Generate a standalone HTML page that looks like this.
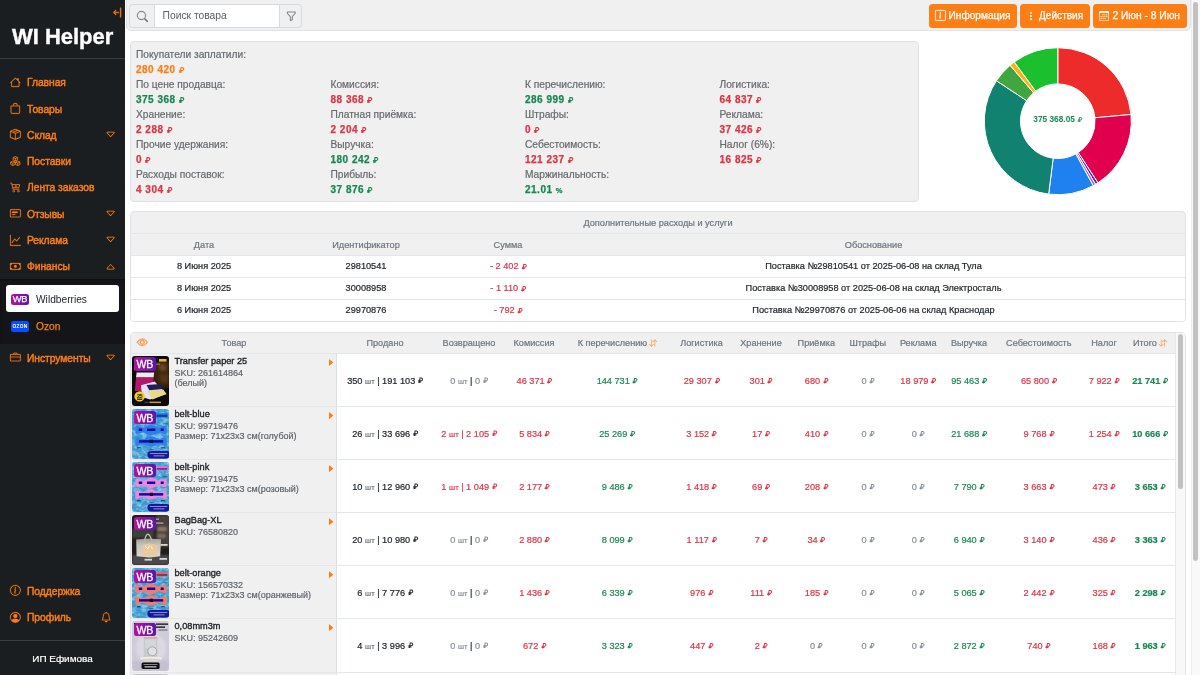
<!DOCTYPE html><html lang="ru"><head><meta charset="utf-8"><title>WI Helper</title><style>
*{box-sizing:border-box}
html,body{margin:0;padding:0}
html{width:1200px;height:675px;overflow:hidden}
body{width:1200px;height:675px;overflow:hidden;background:#fff;will-change:transform;font-family:"Liberation Sans",sans-serif;position:relative;color:#212529}
#root{position:absolute;left:0;top:0;width:1200px;height:675px;overflow:hidden}
svg.ic{fill:currentColor;display:block;stroke:currentColor;stroke-width:.35;overflow:visible}
svg.rub{width:.5em;height:.6em;fill:none;stroke:currentColor;stroke-width:2.2;display:inline-block;vertical-align:baseline;margin-left:.32em;overflow:visible;transform:skewX(-8deg)}
.abs{position:absolute}
#sb{position:absolute;left:0;top:0;width:125px;height:675px;background:#1b1e21}
#logo{position:absolute;left:11.9px;top:21.8px;font-size:22px;font-weight:700;color:#fff;line-height:30px;letter-spacing:0;-webkit-text-stroke:.35px #fff;white-space:nowrap}
.hr{position:absolute;left:0;width:125px;height:1px;background:#3a3f44}
.mi{position:absolute;left:0;width:125px;height:20px;color:#fd7e14;font-size:10.3px;font-weight:400;-webkit-text-stroke:.45px #fd7e14;line-height:20px;letter-spacing:-.05px;white-space:nowrap}
.mi .ic{position:absolute;left:10.2px;top:4.7px}
.mi span{position:absolute;left:27px;top:1.2px}
.mi .car{left:105.3px;top:4.4px;stroke-width:.1}
#sub{position:absolute;left:0;top:279px;width:125px;height:65px;background:#131518;box-shadow:inset 0 1px 2px rgba(0,0,0,.35)}
#wbitem{position:absolute;left:6px;top:285px;width:113px;height:27px;background:#fff;border-radius:3px}
.badge{position:absolute;border-radius:2.5px;color:#fff;font-weight:700;text-align:center}
#main{position:absolute;left:125px;top:0;width:1075px;height:675px}
#topbar{position:absolute;left:126px;top:-1px;width:1065px;height:32px;background:#f0f0f0;border:1px solid #dfe3e7;border-radius:0 0 5px 5px}
.btn{position:absolute;top:4px;height:23.5px;background:#fd7e14;border-radius:3.5px;color:#fff;font-size:10.1px;line-height:23.5px;white-space:nowrap;-webkit-text-stroke:.25px #fff}
.btn .ic{position:absolute;top:6.5px}
.btn span{position:absolute;top:0}
.panel{position:absolute;background:#f0f0f0;border:1px solid #dfe3e7;border-radius:4px}
.sl{position:absolute;-webkit-text-stroke:.2px;font-size:10.2px;line-height:15px;color:#666a6e;white-space:nowrap}
.sv{position:absolute;-webkit-text-stroke:.25px;font-size:10px;line-height:15px;font-weight:700;letter-spacing:.5px;white-space:nowrap}
.g{color:#198754}.r{color:#dc3545}.o{color:#fd7e14}.m{color:#868e96}
.t1{position:absolute;-webkit-text-stroke:.2px;font-size:9.2px;line-height:22px;white-space:nowrap;text-align:center;transform:translateX(-50%)}
.th{color:#6c757d}
.hl{position:absolute;height:1px;background:#e3e7eb}
.vl{position:absolute;width:1px;background:#e3e7eb}
.c{position:absolute;-webkit-text-stroke:.2px;font-size:9.2px;letter-spacing:0;white-space:nowrap;transform:translate(-50%,-50%);line-height:12px}
.c small{font-size:7.6px;color:#6c757d}
.c.r small,.c .r small{color:#dc3545}
.c.m small{color:#868e96}
.c b{font-weight:700}
.pn{position:absolute;left:174.5px;font-size:9.2px;font-weight:400;-webkit-text-stroke:.35px #212529;color:#212529;white-space:nowrap;line-height:11px}
.ps{position:absolute;left:174.5px;-webkit-text-stroke:.18px;font-size:9px;color:#5c6166;white-space:nowrap;line-height:10.5px}
.tri{position:absolute;left:328.9px;width:4.5px;height:7.2px;background:#fd7e14;clip-path:polygon(0 0,100% 50%,0 100%)}
.img{position:absolute;left:132px;width:37.1px;height:49.7px;border-radius:3px;overflow:hidden}
.img svg{display:block}
.wb{position:absolute;left:1.8px;top:1.4px;width:22px;height:13.8px;border-radius:2.5px;background:linear-gradient(90deg,#b3129e,#5a17a8);color:#fff;font-size:10.6px;font-weight:400;-webkit-text-stroke:.3px #fff;line-height:14.4px;text-align:center;letter-spacing:-.3px}
</style></head><body><div id="root">
<div id="sb">
<svg class="ic" viewBox="0 0 16 16" width="11" height="11" style="position:absolute;left:111.5px;top:7.2px;color:#fd7e14;stroke-width:.9"><path fill-rule="evenodd" d="M12.500 15a.5.5 0 0 1-.5-.5v-13a.5.5 0 0 1 1 0v13a.5.5 0 0 1-.5.5M10 8a.5.5 0 0 1-.5.5H3.707l2.147 2.146a.5.5 0 0 1-.708.708l-3-3a.5.5 0 0 1 0-.708l3-3a.5.5 0 1 1 .708.708L3.707 7.500H9.500a.5.5 0 0 1 .5.5"/></svg>
<div id="logo">WI Helper</div>
<div class="hr" style="top:58.4px"></div>
<div class="mi" style="top:72.2px"><svg class="ic" viewBox="0 0 16 16" width="10.7" height="10.7" style=""><path d="M8.707 1.5a1 1 0 0 0-1.414 0L.646 8.146a.5.5 0 0 0 .708.708L2 8.207V13.5A1.5 1.5 0 0 0 3.5 15h9a1.5 1.5 0 0 0 1.5-1.5V8.207l.646.647a.5.5 0 0 0 .708-.708L13 5.793V2.5a.5.5 0 0 0-.5-.5h-1a.5.5 0 0 0-.5.5v1.293zM13 7.207V13.5a.5.5 0 0 1-.5.5h-9a.5.5 0 0 1-.5-.5V7.207l5-5z"/></svg><span>Главная</span>
</div>
<div class="mi" style="top:98.4px"><svg class="ic" viewBox="0 0 16 16" width="10.7" height="10.7" style=""><path d="M8 1a2.5 2.5 0 0 1 2.5 2.5V4h-5v-.5A2.5 2.5 0 0 1 8 1m3.5 3v-.5a3.5 3.5 0 1 0-7 0V4H1v10a2 2 0 0 0 2 2h10a2 2 0 0 0 2-2V4zM2 5h12v9a1 1 0 0 1-1 1H3a1 1 0 0 1-1-1z"/></svg><span>Товары</span>
</div>
<div class="mi" style="top:124.5px"><svg class="ic" viewBox="0 0 16 16" width="10.7" height="10.7" style=""><path d="M8.186 1.113a.5.5 0 0 0-.372 0L1.846 3.5l2.404.961L10.404 2zm3.564 1.426L5.596 5 8 5.961 14.154 3.5zm3.25 1.7-6.5 2.6v7.922l6.5-2.6V4.24zM7.5 14.762V6.838L1 4.239v7.923zM7.443.184a1.5 1.5 0 0 1 1.114 0l7.129 2.852A.5.5 0 0 1 16 3.5v8.662a1 1 0 0 1-.629.928l-7.185 2.874a.5.5 0 0 1-.372 0L.63 13.09a1 1 0 0 1-.63-.928V3.5a.5.5 0 0 1 .314-.464z"/></svg><span>Склад</span>
<svg class="ic car" viewBox="0 0 16 16" width="11.2" height="11.2" style=""><path d="M3.204 5h9.592L8 10.481zm-.753.659 4.796 5.480a1 1 0 0 0 1.506 0l4.796-5.480c.566-.647.106-1.659-.753-1.659H3.204a1 1 0 0 0-.753 1.659"/></svg>
</div>
<div class="mi" style="top:151.1px"><svg class="ic" viewBox="0 0 16 16" width="10.7" height="10.7" style=""><g fill="none" stroke="currentColor" stroke-width="1.25" stroke-linejoin="round"><path d="M8 .8l3.3 1.5v3.6L8 7.4 4.7 5.9V2.3z M4.7 2.3L8 3.8l3.3-1.5M8 3.8v3.6"/><path d="M4.3 7.6l3.3 1.5v3.6l-3.3 1.5L1 12.7V9.1z M1 9.1l3.3 1.5 3.3-1.5M4.3 10.6v3.6"/><path d="M11.7 7.6L15 9.1v3.6l-3.3 1.5-3.3-1.5V9.1z M8.4 9.1l3.3 1.5L15 9.1M11.7 10.6v3.6"/></g></svg><span>Поставки</span>
</div>
<div class="mi" style="top:177.3px"><svg class="ic" viewBox="0 0 16 16" width="10.7" height="10.7" style=""><g fill="none" stroke="currentColor" stroke-width="1.25" stroke-linecap="round" stroke-linejoin="round"><path d="M.8 1.700h1.800l1.800 9h9.200"/><path d="M3.300 3.900h11.200l-1.100 4.600H4.300"/><path d="M8.800 4.900v2.600M7.500 6.200h2.600" stroke-width="1"/><circle cx="5.400" cy="13.600" r="1.400" stroke-width="1"/><circle cx="12.400" cy="13.600" r="1.400" stroke-width="1"/></g></svg><span>Лента заказов</span>
</div>
<div class="mi" style="top:203.4px"><svg class="ic" viewBox="0 0 16 16" width="10.7" height="10.7" style=""><path d="M14.500 3a.5.5 0 0 1 .5.5v9a.5.5 0 0 1-.5.5h-13a.5.5 0 0 1-.5-.5v-9a.5.5 0 0 1 .5-.5zm-13-1A1.500 1.500 0 0 0 0 3.500v9A1.500 1.500 0 0 0 1.500 14h13a1.500 1.500 0 0 0 1.500-1.500v-9A1.500 1.500 0 0 0 14.500 2z"/><rect x="3" y="5.200" width="8.500" height="2.200" rx=".5"/><rect x="3" y="9.200" width="5" height="1.100" rx=".5"/></svg><span>Отзывы</span>
<svg class="ic car" viewBox="0 0 16 16" width="11.2" height="11.2" style=""><path d="M3.204 5h9.592L8 10.481zm-.753.659 4.796 5.480a1 1 0 0 0 1.506 0l4.796-5.480c.566-.647.106-1.659-.753-1.659H3.204a1 1 0 0 0-.753 1.659"/></svg>
</div>
<div class="mi" style="top:230.0px"><svg class="ic" viewBox="0 0 16 16" width="10.7" height="10.7" style=""><path fill-rule="evenodd" d="M0 0h1v15h15v1H0zm14.817 3.113a.5.5 0 0 1 .07.704l-4.5 5.5a.5.5 0 0 1-.74.037L7.06 6.767l-3.656 5.027a.5.5 0 0 1-.808-.588l4-5.5a.5.5 0 0 1 .758-.06l2.609 2.61 4.15-5.073a.5.5 0 0 1 .704-.07"/></svg><span>Реклама</span>
<svg class="ic car" viewBox="0 0 16 16" width="11.2" height="11.2" style=""><path d="M3.204 5h9.592L8 10.481zm-.753.659 4.796 5.480a1 1 0 0 0 1.506 0l4.796-5.480c.566-.647.106-1.659-.753-1.659H3.204a1 1 0 0 0-.753 1.659"/></svg>
</div>
<div class="mi" style="top:256.3px"><svg class="ic" viewBox="0 0 16 16" width="10.7" height="10.7" style=""><path d="M8 10a2 2 0 1 0 0-4 2 2 0 0 0 0 4"/><path d="M0 4a1 1 0 0 1 1-1h14a1 1 0 0 1 1 1v8a1 1 0 0 1-1 1H1a1 1 0 0 1-1-1zm3 0a2 2 0 0 1-2 2v4a2 2 0 0 1 2 2h10a2 2 0 0 1 2-2V6a2 2 0 0 1-2-2z"/></svg><span>Финансы</span>
<svg class="ic car" viewBox="0 0 16 16" width="11.2" height="11.2" style=""><path d="M3.204 11h9.592L8 5.519zm-.753-.659 4.796-5.480a1 1 0 0 1 1.506 0l4.796 5.480c.566.647.106 1.659-.753 1.659H3.204a1 1 0 0 1-.753-1.659"/></svg>
</div>
<div class="mi" style="top:347.7px"><svg class="ic" viewBox="0 0 16 16" width="10.7" height="10.7" style=""><path d="M6.5 1A1.5 1.5 0 0 0 5 2.5V3H1.5A1.5 1.5 0 0 0 0 4.500v8A1.500 1.500 0 0 0 1.500 14h13a1.500 1.500 0 0 0 1.500-1.500v-8A1.500 1.500 0 0 0 14.500 3H11v-.5A1.500 1.500 0 0 0 9.500 1zm0 1h3a.5.5 0 0 1 .5.5V3H6v-.5a.5.5 0 0 1 .5-.5m-5 2h13a.5.5 0 0 1 .5.5V7H1V4.500a.5.5 0 0 1 .5-.5M1 8h14v4.500a.5.5 0 0 1-.5.5h-13a.5.5 0 0 1-.5-.5z"/></svg><span>Инструменты</span>
<svg class="ic car" viewBox="0 0 16 16" width="11.2" height="11.2" style=""><path d="M3.204 5h9.592L8 10.481zm-.753.659 4.796 5.480a1 1 0 0 0 1.506 0l4.796-5.480c.566-.647.106-1.659-.753-1.659H3.204a1 1 0 0 0-.753 1.659"/></svg>
</div>
<div class="mi" style="top:580.6px"><svg class="ic" viewBox="0 0 16 16" width="10.7" height="10.7" style=""><path d="M8 15A7 7 0 1 1 8 1a7 7 0 0 1 0 14m0 1A8 8 0 1 0 8 0a8 8 0 0 0 0 16"/><path d="m8.930 6.588-2.290.287-.082.380.450.083c.294.070.352.176.288.469l-.738 3.468c-.194.897.105 1.319.808 1.319.545 0 1.178-.252 1.465-.598l.088-.416c-.200.176-.492.246-.686.246-.275 0-.375-.193-.304-.533zM9 4.500a1 1 0 1 1-2 0 1 1 0 0 1 2 0"/></svg><span>Поддержка</span>
</div>
<div class="mi" style="top:607.0px"><svg class="ic" viewBox="0 0 16 16" width="10.7" height="10.7" style=""><path d="M11 6a3 3 0 1 1-6 0 3 3 0 0 1 6 0"/><path fill-rule="evenodd" d="M0 8a8 8 0 1 1 16 0A8 8 0 0 1 0 8m8-7a7 7 0 0 0-5.468 11.370C3.242 11.226 4.805 10 8 10s4.757 1.225 5.468 2.370A7 7 0 0 0 8 1"/></svg><span>Профиль</span>
</div>
<svg class="ic" viewBox="0 0 16 16" width="10.3" height="10.3" style="position:absolute;left:100.8px;top:611.8px;color:#fd7e14"><path d="M8 16a2 2 0 0 0 2-2H6a2 2 0 0 0 2 2M8 1.918l-.797.161A4 4 0 0 0 4 6c0 .628-.134 2.197-.459 3.742-.16.767-.376 1.566-.663 2.258h10.244c-.287-.692-.502-1.490-.663-2.258C12.134 8.197 12 6.628 12 6a4 4 0 0 0-3.203-3.920zM14.220 12c.223.447.481.801.780 1H1c.299-.199.557-.553.780-1C2.680 10.200 3 6.880 3 6c0-2.420 1.720-4.440 4.005-4.901a1 1 0 1 1 1.990 0A5 5 0 0 1 13 6c0 .880.320 4.200 1.220 6"/></svg>
<div id="sub"></div>
<div id="wbitem"></div>
<div class="badge" style="left:10.7px;top:294px;width:18.7px;height:11.2px;background:linear-gradient(90deg,#b3129e,#5a17a8);font-size:9.3px;font-weight:400;-webkit-text-stroke:.25px #fff;line-height:11.6px;letter-spacing:-.3px">WB</div>
<div class="abs" style="left:36px;top:292px;font-size:10.2px;line-height:15px;color:#212529">Wildberries</div>
<div class="badge" style="left:10.7px;top:321px;width:18.7px;height:11px;background:#0a4dff;font-size:4.8px;line-height:11.2px;letter-spacing:.25px">OZON</div>
<div class="abs" style="left:36px;top:319px;font-size:10.2px;line-height:15px;color:#fd7e14;-webkit-text-stroke:.25px #fd7e14">Ozon</div>
<div class="hr" style="top:640px"></div>
<div class="abs" style="left:0;width:125px;top:650.8px;text-align:center;font-size:9.95px;line-height:16px;color:#fff;-webkit-text-stroke:.2px #fff">ИП Ефимова</div>
</div>
<div id="topbar"></div>
<div class="abs" style="left:129px;top:4px;width:172.5px;height:23.5px;border:1px solid #d5dade;border-radius:3.5px;background:#f0f0f0;overflow:hidden"><div class="abs" style="left:24px;top:0;width:126px;height:22px;background:#fff;border-left:1px solid #d5dade;border-right:1px solid #d5dade"></div><svg class="ic" viewBox="0 0 16 16" width="11" height="11" style="position:absolute;left:7px;top:5.5px;color:#6c757d"><path d="M11.742 10.344a6.500 6.500 0 1 0-1.397 1.398h-.001q.044.060.098.115l3.850 3.850a1 1 0 0 0 1.415-1.414l-3.850-3.850a1 1 0 0 0-.115-.100zM12 6.500a5.500 5.500 0 1 1-11 0 5.500 5.500 0 0 1 11 0"/></svg><svg class="ic" viewBox="0 0 16 16" width="10.5" height="10.5" style="position:absolute;left:155.5px;top:6px;color:#6c757d"><path d="M1.500 1.500A.5.5 0 0 1 2 1h12a.5.5 0 0 1 .5.5v2a.5.5 0 0 1-.128.334L10 8.692V13.500a.5.5 0 0 1-.342.474l-3 1A.5.5 0 0 1 6 14.500V8.692L1.628 3.834A.5.5 0 0 1 1.500 3.500zm1 .5v1.308l4.372 4.858A.5.5 0 0 1 7 8.500v5.306l2-.666V8.500a.5.5 0 0 1 .128-.334L13.500 3.308V2z"/></svg><div class="abs" style="left:32.5px;top:0;font-size:10.3px;line-height:22px;color:#5c6166">Поиск товара</div></div>
<div class="btn" style="left:929.3px;width:87.5px"><svg class="ic" viewBox="0 0 16 16" width="10.8" height="10.8" style="left:6.2px;top:6.1px"><path d="M14 1a1 1 0 0 1 1 1v12a1 1 0 0 1-1 1H2a1 1 0 0 1-1-1V2a1 1 0 0 1 1-1zM2 0a2 2 0 0 0-2 2v12a2 2 0 0 0 2 2h12a2 2 0 0 0 2-2V2a2 2 0 0 0-2-2z"/><path d="m8.930 6.588-2.290.287-.082.380.450.083c.294.070.352.176.288.469l-.738 3.468c-.194.897.105 1.319.808 1.319.545 0 1.178-.252 1.465-.598l.088-.416c-.200.176-.492.246-.686.246-.275 0-.375-.193-.304-.533zM9 4.500a1 1 0 1 1-2 0 1 1 0 0 1 2 0"/></svg><span style="left:19.3px">Информация</span></div>
<div class="btn" style="left:1020px;width:70px"><svg class="ic" viewBox="0 0 16 16" width="10" height="10" style="left:6px"><path d="M9.500 13a1.500 1.500 0 1 1-3 0 1.500 1.500 0 0 1 3 0m0-5a1.500 1.500 0 1 1-3 0 1.500 1.500 0 0 1 3 0m0-5a1.500 1.500 0 1 1-3 0 1.500 1.500 0 0 1 3 0"/></svg><span style="left:19px">Действия</span></div>
<div class="btn" style="left:1093.2px;width:93.6px"><svg class="ic" viewBox="0 0 16 16" width="10" height="10" style="left:5.8px;stroke-width:0"><path d="M14 0H2a2 2 0 0 0-2 2v12a2 2 0 0 0 2 2h12a2 2 0 0 0 2-2V2a2 2 0 0 0-2-2M1 3.857C1 3.384 1.448 3 2 3h12c.552 0 1 .384 1 .857v10.286c0 .473-.448.857-1 .857H2c-.552 0-1-.384-1-.857z"/><path d="M6.500 7a1 1 0 1 0 0-2 1 1 0 0 0 0 2m3 0a1 1 0 1 0 0-2 1 1 0 0 0 0 2m3 0a1 1 0 1 0 0-2 1 1 0 0 0 0 2m-9 3a1 1 0 1 0 0-2 1 1 0 0 0 0 2m3 0a1 1 0 1 0 0-2 1 1 0 0 0 0 2m3 0a1 1 0 1 0 0-2 1 1 0 0 0 0 2m3 0a1 1 0 1 0 0-2 1 1 0 0 0 0 2m-9 3a1 1 0 1 0 0-2 1 1 0 0 0 0 2m3 0a1 1 0 1 0 0-2 1 1 0 0 0 0 2m3 0a1 1 0 1 0 0-2 1 1 0 0 0 0 2"/></svg><span style="left:19.2px;font-size:10.25px">2 Июн - 8 Июн</span></div>
<div class="panel" style="left:130px;top:41px;width:789px;height:160.5px"></div>
<div class="sl" style="left:136px;top:46.7px">Покупатели заплатили:</div>
<div class="sv o" style="left:136px;top:61.7px">280 420<svg class="rub" viewBox="0 0 10 12"><path d="M3.3 12V1.3h2.9a3 3 0 0 1 0 6H0.4M0.4 10h6.600" /></svg></div>
<div class="sl" style="left:136px;top:76.7px">По цене продавца:</div>
<div class="sv g" style="left:136px;top:91.7px">375 368<svg class="rub" viewBox="0 0 10 12"><path d="M3.3 12V1.3h2.9a3 3 0 0 1 0 6H0.4M0.4 10h6.600" /></svg></div>
<div class="sl" style="left:136px;top:106.7px">Хранение:</div>
<div class="sv r" style="left:136px;top:121.7px">2 288<svg class="rub" viewBox="0 0 10 12"><path d="M3.3 12V1.3h2.9a3 3 0 0 1 0 6H0.4M0.4 10h6.600" /></svg></div>
<div class="sl" style="left:136px;top:136.7px">Прочие удержания:</div>
<div class="sv r" style="left:136px;top:151.7px">0<svg class="rub" viewBox="0 0 10 12"><path d="M3.3 12V1.3h2.9a3 3 0 0 1 0 6H0.4M0.4 10h6.600" /></svg></div>
<div class="sl" style="left:136px;top:166.7px">Расходы поставок:</div>
<div class="sv r" style="left:136px;top:181.7px">4 304<svg class="rub" viewBox="0 0 10 12"><path d="M3.3 12V1.3h2.9a3 3 0 0 1 0 6H0.4M0.4 10h6.600" /></svg></div>
<div class="sl" style="left:330.5px;top:76.7px">Комиссия:</div>
<div class="sv r" style="left:330.5px;top:91.7px">88 368<svg class="rub" viewBox="0 0 10 12"><path d="M3.3 12V1.3h2.9a3 3 0 0 1 0 6H0.4M0.4 10h6.600" /></svg></div>
<div class="sl" style="left:330.5px;top:106.7px">Платная приёмка:</div>
<div class="sv r" style="left:330.5px;top:121.7px">2 204<svg class="rub" viewBox="0 0 10 12"><path d="M3.3 12V1.3h2.9a3 3 0 0 1 0 6H0.4M0.4 10h6.600" /></svg></div>
<div class="sl" style="left:330.5px;top:136.7px">Выручка:</div>
<div class="sv g" style="left:330.5px;top:151.7px">180 242<svg class="rub" viewBox="0 0 10 12"><path d="M3.3 12V1.3h2.9a3 3 0 0 1 0 6H0.4M0.4 10h6.600" /></svg></div>
<div class="sl" style="left:330.5px;top:166.7px">Прибыль:</div>
<div class="sv g" style="left:330.5px;top:181.7px">37 876<svg class="rub" viewBox="0 0 10 12"><path d="M3.3 12V1.3h2.9a3 3 0 0 1 0 6H0.4M0.4 10h6.600" /></svg></div>
<div class="sl" style="left:525px;top:76.7px">К перечислению:</div>
<div class="sv g" style="left:525px;top:91.7px">286 999<svg class="rub" viewBox="0 0 10 12"><path d="M3.3 12V1.3h2.9a3 3 0 0 1 0 6H0.4M0.4 10h6.600" /></svg></div>
<div class="sl" style="left:525px;top:106.7px">Штрафы:</div>
<div class="sv r" style="left:525px;top:121.7px">0<svg class="rub" viewBox="0 0 10 12"><path d="M3.3 12V1.3h2.9a3 3 0 0 1 0 6H0.4M0.4 10h6.600" /></svg></div>
<div class="sl" style="left:525px;top:136.7px">Себестоимость:</div>
<div class="sv r" style="left:525px;top:151.7px">121 237<svg class="rub" viewBox="0 0 10 12"><path d="M3.3 12V1.3h2.9a3 3 0 0 1 0 6H0.4M0.4 10h6.600" /></svg></div>
<div class="sl" style="left:525px;top:166.7px">Маржинальность:</div>
<div class="sv g" style="left:525px;top:181.7px">21.01 <span style="font-size:7.5px;letter-spacing:0">%</span></div>
<div class="sl" style="left:719.5px;top:76.7px">Логистика:</div>
<div class="sv r" style="left:719.5px;top:91.7px">64 837<svg class="rub" viewBox="0 0 10 12"><path d="M3.3 12V1.3h2.9a3 3 0 0 1 0 6H0.4M0.4 10h6.600" /></svg></div>
<div class="sl" style="left:719.5px;top:106.7px">Реклама:</div>
<div class="sv r" style="left:719.5px;top:121.7px">37 426<svg class="rub" viewBox="0 0 10 12"><path d="M3.3 12V1.3h2.9a3 3 0 0 1 0 6H0.4M0.4 10h6.600" /></svg></div>
<div class="sl" style="left:719.5px;top:136.7px">Налог (6%):</div>
<div class="sv r" style="left:719.5px;top:151.7px">16 825<svg class="rub" viewBox="0 0 10 12"><path d="M3.3 12V1.3h2.9a3 3 0 0 1 0 6H0.4M0.4 10h6.600" /></svg></div>
<svg class="abs" style="left:970px;top:35px" width="175" height="175" viewBox="970 35 175 175">
<path d="M1057.80 47.70A73.5 73.5 0 0 1 1130.99 114.48L1094.94 117.79A37.3 37.3 0 0 0 1057.80 83.90Z" fill="#ee2b2b" stroke="#fff" stroke-width="1" stroke-linejoin="round"/>
<path d="M1130.99 114.48A73.5 73.5 0 0 1 1097.90 182.80L1078.15 152.46A37.3 37.3 0 0 0 1094.94 117.79Z" fill="#e0004e" stroke="#fff" stroke-width="1" stroke-linejoin="round"/>
<path d="M1097.90 182.80A73.5 73.5 0 0 1 1095.51 184.29L1076.94 153.22A37.3 37.3 0 0 0 1078.15 152.46Z" fill="#6f12b0" stroke="#fff" stroke-width="1" stroke-linejoin="round"/>
<path d="M1095.51 184.29A73.5 73.5 0 0 1 1093.16 185.63L1075.75 153.90A37.3 37.3 0 0 0 1076.94 153.22Z" fill="#a56be0" stroke="#fff" stroke-width="1" stroke-linejoin="round"/>
<path d="M1093.16 185.63A73.5 73.5 0 0 1 1048.67 194.13L1053.17 158.21A37.3 37.3 0 0 0 1075.75 153.90Z" fill="#1f80f0" stroke="#fff" stroke-width="1" stroke-linejoin="round"/>
<path d="M1048.67 194.13A73.5 73.5 0 0 1 996.45 80.73L1026.66 100.66A37.3 37.3 0 0 0 1053.17 158.21Z" fill="#128270" stroke="#fff" stroke-width="1" stroke-linejoin="round"/>
<path d="M996.45 80.73A73.5 73.5 0 0 1 1010.11 65.27L1033.60 92.82A37.3 37.3 0 0 0 1026.66 100.66Z" fill="#40a640" stroke="#fff" stroke-width="1" stroke-linejoin="round"/>
<path d="M1010.11 65.27A73.5 73.5 0 0 1 1014.26 61.98L1035.70 91.15A37.3 37.3 0 0 0 1033.60 92.82Z" fill="#ffb30f" stroke="#fff" stroke-width="1" stroke-linejoin="round"/>
<path d="M1014.26 61.98A73.5 73.5 0 0 1 1057.80 47.70L1057.80 83.90A37.3 37.3 0 0 0 1035.70 91.15Z" fill="#1cc02e" stroke="#fff" stroke-width="1" stroke-linejoin="round"/>
</svg>
<div class="abs g" style="left:1057.5px;top:118.6px;transform:translate(-50%,-50%);font-size:8.3px;font-weight:700;white-space:nowrap;line-height:10px">375 368.05<svg class="rub" viewBox="0 0 10 12"><path d="M3.3 12V1.3h2.9a3 3 0 0 1 0 6H0.4M0.4 10h6.600" /></svg></div>
<div class="panel" style="left:130px;top:211px;width:1056px;height:110.5px;overflow:hidden">
<div class="abs" style="left:0;top:43px;width:1056px;height:67px;background:#fff"></div>
<div class="hl" style="left:0;top:20.8px;width:1056px"></div>
<div class="hl" style="left:0;top:42.8px;width:1056px"></div>
<div class="hl" style="left:0;top:64.8px;width:1056px"></div>
<div class="hl" style="left:0;top:86.6px;width:1056px"></div>
</div>
<div class="t1 th" style="left:658px;top:211.8px">Дополнительные расходы и услуги</div>
<div class="t1 th" style="left:204px;top:233.6px">Дата</div>
<div class="t1 th" style="left:366px;top:233.6px">Идентификатор</div>
<div class="t1 th" style="left:508px;top:233.6px">Сумма</div>
<div class="t1 th" style="left:873.5px;top:233.6px">Обоснование</div>
<div class="t1" style="left:204px;top:255.3px">8 Июня 2025</div>
<div class="t1" style="left:366px;top:255.3px">29810541</div>
<div class="t1 r" style="left:508px;top:255.3px">- 2 402<svg class="rub" viewBox="0 0 10 12"><path d="M3.3 12V1.3h2.9a3 3 0 0 1 0 6H0.4M0.4 10h6.600" /></svg></div>
<div class="t1" style="left:873.5px;top:255.3px">Поставка №29810541 от 2025-06-08 на склад Тула</div>
<div class="t1" style="left:204px;top:277.3px">8 Июня 2025</div>
<div class="t1" style="left:366px;top:277.3px">30008958</div>
<div class="t1 r" style="left:508px;top:277.3px">- 1 110<svg class="rub" viewBox="0 0 10 12"><path d="M3.3 12V1.3h2.9a3 3 0 0 1 0 6H0.4M0.4 10h6.600" /></svg></div>
<div class="t1" style="left:873.5px;top:277.3px">Поставка №30008958 от 2025-06-08 на склад Электросталь</div>
<div class="t1" style="left:204px;top:299.3px">6 Июня 2025</div>
<div class="t1" style="left:366px;top:299.3px">29970876</div>
<div class="t1 r" style="left:508px;top:299.3px">- 792<svg class="rub" viewBox="0 0 10 12"><path d="M3.3 12V1.3h2.9a3 3 0 0 1 0 6H0.4M0.4 10h6.600" /></svg></div>
<div class="t1" style="left:873.5px;top:299.3px">Поставка №29970876 от 2025-06-06 на склад Краснодар</div>
<div class="panel" style="left:130px;top:332px;width:1056px;height:360px;overflow:hidden;background:#fff">
<div class="abs" style="left:0;top:0;width:1044.5px;height:20.5px;background:#f0f0f0"></div>
<div class="abs" style="left:0;top:0;width:205.5px;height:360px;background:#f0f0f0"></div>
<div class="vl" style="left:205.1px;top:20.5px;height:340px;background:#d9dee3"></div>
<div class="abs" style="left:1044.2px;top:0;width:10px;height:360px;background:#f8f8f8;border-left:1px solid #e8eaec"></div>
<div class="hl" style="left:0;top:20.2px;width:1044.5px"></div>
<div class="hl" style="left:0;top:73.2px;width:1044.5px"></div>
<div class="hl" style="left:0;top:126.3px;width:1044.5px"></div>
<div class="hl" style="left:0;top:179.3px;width:1044.5px"></div>
<div class="hl" style="left:0;top:232.4px;width:1044.5px"></div>
<div class="hl" style="left:0;top:285.4px;width:1044.5px"></div>
<div class="hl" style="left:0;top:338.5px;width:1044.5px"></div>
<div class="abs" style="left:1047.1px;top:1.3px;width:4.9px;height:154.4px;border-radius:2.5px;background:#c1c1c1"></div>
</div>
<svg class="ic" viewBox="0 0 16 16" width="10.6" height="10.6" style="position:absolute;left:137.2px;top:337.3px;color:#fd9440;stroke-width:.8"><path d="M16 8s-3-5.500-8-5.500S0 8 0 8s3 5.500 8 5.500S16 8 16 8M1.173 8a13 13 0 0 1 1.660-2.043C4.120 4.668 5.880 3.500 8 3.500s3.879 1.168 5.168 2.457A13 13 0 0 1 14.828 8q-.086.130-.195.288c-.335.480-.830 1.120-1.465 1.755C11.879 11.332 10.119 12.500 8 12.500s-3.879-1.168-5.168-2.457A13 13 0 0 1 1.172 8z"/><path d="M8 5.500a2.500 2.500 0 1 0 0 5 2.500 2.500 0 0 0 0-5M4.500 8a3.500 3.500 0 1 1 7 0 3.500 3.500 0 0 1-7 0"/></svg>
<div class="t1 th" style="left:234px;top:332.2px;font-size:9.15px">Товар</div>
<div class="t1 th" style="left:385px;top:332.2px;font-size:9.15px">Продано</div>
<div class="t1 th" style="left:469px;top:332.2px;font-size:9.15px">Возвращено</div>
<div class="t1 th" style="left:534px;top:332.2px;font-size:9.15px">Комиссия</div>
<div class="t1 th" style="left:617.5px;top:332.2px;font-size:9.15px">К перечислению<svg class="ic" viewBox="0 0 16 16" width="8" height="8" style="display:inline-block;vertical-align:-1.1px;margin-left:2.2px;color:#fd9a47"><path fill-rule="evenodd" d="M11.500 15a.5.5 0 0 0 .5-.5V2.707l3.146 3.147a.5.5 0 0 0 .708-.708l-4-4a.5.5 0 0 0-.708 0l-4 4a.5.5 0 1 0 .708.708L11 2.707V14.500a.5.5 0 0 0 .5.5m-7-14a.5.5 0 0 1 .5.5v11.793l3.146-3.147a.5.5 0 0 1 .708.708l-4 4a.5.5 0 0 1-.708 0l-4-4a.5.5 0 0 1 .708-.708L4 13.293V1.500a.5.5 0 0 1 .5-.5"/></svg></div>
<div class="t1 th" style="left:701.5px;top:332.2px;font-size:9.15px">Логистика</div>
<div class="t1 th" style="left:761px;top:332.2px;font-size:9.15px">Хранение</div>
<div class="t1 th" style="left:816.3px;top:332.2px;font-size:9.15px">Приёмка</div>
<div class="t1 th" style="left:867.8px;top:332.2px;font-size:9.15px">Штрафы</div>
<div class="t1 th" style="left:918.2px;top:332.2px;font-size:9.15px">Реклама</div>
<div class="t1 th" style="left:969px;top:332.2px;font-size:9.15px">Выручка</div>
<div class="t1 th" style="left:1038.8px;top:332.2px;font-size:9.15px">Себестоимость</div>
<div class="t1 th" style="left:1104px;top:332.2px;font-size:9.15px">Налог</div>
<div class="t1 th" style="left:1150px;top:332.2px;font-size:9.15px">Итого<svg class="ic" viewBox="0 0 16 16" width="8" height="8" style="display:inline-block;vertical-align:-1.1px;margin-left:2.2px;color:#fd9a47"><path fill-rule="evenodd" d="M11.500 15a.5.5 0 0 0 .5-.5V2.707l3.146 3.147a.5.5 0 0 0 .708-.708l-4-4a.5.5 0 0 0-.708 0l-4 4a.5.5 0 1 0 .708.708L11 2.707V14.500a.5.5 0 0 0 .5.5m-7-14a.5.5 0 0 1 .5.5v11.793l3.146-3.147a.5.5 0 0 1 .708.708l-4 4a.5.5 0 0 1-.708 0l-4-4a.5.5 0 0 1 .708-.708L4 13.293V1.500a.5.5 0 0 1 .5-.5"/></svg></div>
<div class="img" style="top:356.1px"><svg width="37.5" height="50" viewBox="0 0 37.5 50"><defs><filter id="b0" x="-10%" y="-10%" width="120%" height="120%"><feGaussianBlur stdDeviation=".35"/></filter><filter id="b1" x="-20%" y="-20%" width="140%" height="140%"><feGaussianBlur stdDeviation="1.6"/></filter></defs>
<rect width="37.5" height="50" fill="#0b0909"/>
<g filter="url(#b1)">
<path d="M21 5h17v27h-9l-8-6z" fill="#38220f"/>
<path d="M26 8h8v7h-6z" fill="#6b4522"/>
<path d="M27 18h9v9h-7z" fill="#553518"/>
</g>
<rect x="27" y="3" width="7.5" height="2.6" fill="#e8b820"/>
<rect x="24" y="7.6" width="4" height="1" fill="#c9c9c9" opacity=".6"/>
<g filter="url(#b0)">
<path d="M4.6 16.6h17.6l-.6 5H4z" fill="#f3e6ee"/>
<path d="M4 21.4h17.8l-1 7.6-9 .6-1 5.4H2.8z" fill="#b3136a"/>
<path d="M9 29.2l13.6-3.6L34.4 38 18 43.6 10 41z" fill="#e4e2f2"/>
<path d="M14.5 29l14.2-1 2.6 5-14 1.2z" fill="#1d2057"/>
<path d="M15.6 35l15.6-1.6 3.2 4.6-14 5.6z" fill="#e6da8a"/>
<circle cx="7.6" cy="40.4" r="5.2" fill="#f2cf1d"/>
</g>
<text x="7.6" y="41.6" font-size="5.6" font-weight="700" text-anchor="middle" fill="#111" font-family="Liberation Sans, sans-serif" letter-spacing="-.4">25</text>
<rect x="5" y="42.6" width="5.2" height="1.2" fill="#111"/>
<rect x="17.5" y="45.6" width="11.5" height="1.5" fill="#c9a21a"/>
<rect x="12.5" y="45.8" width="4" height="1.1" fill="#777" opacity=".6"/>
</svg><div class="wb">WB</div></div>
<div class="pn" style="top:355.7px">Transfer paper 25</div>
<div class="ps" style="top:368.1px">SKU: 261614864</div>
<div class="ps" style="top:377.6px">(белый)</div>
<div class="tri" style="top:358.9px"></div>
<div class="c" style="left:385px;top:380.7px">350 <small>шт</small> | 191 103<svg class="rub" viewBox="0 0 10 12"><path d="M3.3 12V1.3h2.9a3 3 0 0 1 0 6H0.4M0.4 10h6.600" /></svg></div>
<div class="c" style="left:469px;top:380.7px"><span class="m">0 <small style="color:inherit">шт</small></span> | <span class="m">0<svg class="rub" viewBox="0 0 10 12"><path d="M3.3 12V1.3h2.9a3 3 0 0 1 0 6H0.4M0.4 10h6.600" /></svg></span></div>
<div class="c r" style="left:534.4px;top:380.7px">46 371<svg class="rub" viewBox="0 0 10 12"><path d="M3.3 12V1.3h2.9a3 3 0 0 1 0 6H0.4M0.4 10h6.600" /></svg></div>
<div class="c g" style="left:617px;top:380.7px">144 731<svg class="rub" viewBox="0 0 10 12"><path d="M3.3 12V1.3h2.9a3 3 0 0 1 0 6H0.4M0.4 10h6.600" /></svg></div>
<div class="c r" style="left:701.5px;top:380.7px">29 307<svg class="rub" viewBox="0 0 10 12"><path d="M3.3 12V1.3h2.9a3 3 0 0 1 0 6H0.4M0.4 10h6.600" /></svg></div>
<div class="c r" style="left:761px;top:380.7px">301<svg class="rub" viewBox="0 0 10 12"><path d="M3.3 12V1.3h2.9a3 3 0 0 1 0 6H0.4M0.4 10h6.600" /></svg></div>
<div class="c r" style="left:816.3px;top:380.7px">680<svg class="rub" viewBox="0 0 10 12"><path d="M3.3 12V1.3h2.9a3 3 0 0 1 0 6H0.4M0.4 10h6.600" /></svg></div>
<div class="c m" style="left:867.8px;top:380.7px">0<svg class="rub" viewBox="0 0 10 12"><path d="M3.3 12V1.3h2.9a3 3 0 0 1 0 6H0.4M0.4 10h6.600" /></svg></div>
<div class="c r" style="left:918.2px;top:380.7px">18 979<svg class="rub" viewBox="0 0 10 12"><path d="M3.3 12V1.3h2.9a3 3 0 0 1 0 6H0.4M0.4 10h6.600" /></svg></div>
<div class="c g" style="left:969px;top:380.7px">95 463<svg class="rub" viewBox="0 0 10 12"><path d="M3.3 12V1.3h2.9a3 3 0 0 1 0 6H0.4M0.4 10h6.600" /></svg></div>
<div class="c r" style="left:1038.8px;top:380.7px">65 800<svg class="rub" viewBox="0 0 10 12"><path d="M3.3 12V1.3h2.9a3 3 0 0 1 0 6H0.4M0.4 10h6.600" /></svg></div>
<div class="c r" style="left:1104px;top:380.7px">7 922<svg class="rub" viewBox="0 0 10 12"><path d="M3.3 12V1.3h2.9a3 3 0 0 1 0 6H0.4M0.4 10h6.600" /></svg></div>
<div class="c g" style="left:1150px;top:380.7px"><b>21 741<svg class="rub" viewBox="0 0 10 12"><path d="M3.3 12V1.3h2.9a3 3 0 0 1 0 6H0.4M0.4 10h6.600" /></svg></b></div>
<div class="img" style="top:409.2px"><svg width="37.5" height="50" viewBox="0 0 37.5 50"><defs><filter id="wt1" x="0" y="0" width="100%" height="100%"><feTurbulence type="fractalNoise" baseFrequency=".2 .3" numOctaves="3" seed="4" result="n"/><feColorMatrix in="n" type="matrix" values="0 0 0 0 0  0 0 0 0 0  0 0 0 0 0  2.4 0 0 0 -0.95"/><feComposite in="SourceGraphic" operator="in"/></filter><filter id="bb1" x="-10%" y="-10%" width="120%" height="120%"><feGaussianBlur stdDeviation=".3"/></filter></defs>
<rect width="37.5" height="50" fill="#3f98cf"/>
<rect width="37.5" height="50" fill="#8ed2ec" filter="url(#wt1)"/>
<g filter="url(#bb1)">
<rect x="24" y="4.200" width="11.800" height="4.300" rx=".8" fill="#1d6fe6"/>
<rect x="24.800" y="6.300" width="10.400" height="1.300" fill="#10106a" opacity=".8"/>
<rect x="30.700" y="14.300" width="5" height=".9" fill="#123" opacity=".55"/>
<path d="M3.3 18.3C3.3 17.2 4 16.8 5.5 16.8C8 16.8 8.6 18.4 10.6 18.4C13.6 18.4 15 15.9 19 15.9C23 15.9 24.4 18.4 27.4 18.4C29.4 18.4 30 16.8 32.5 16.8C34 16.8 34.7 17.2 34.7 18.3L34.7 23.5C34.7 24.6 34 25 32.5 25C30 25 29.4 23.4 27.4 23.4C24.4 23.4 23 25.9 19 25.9C15 25.9 13.6 23.4 10.6 23.4C8.6 23.4 8 25 5.5 25C4 25 3.3 24.6 3.3 23.5Z" fill="#2d7df0"/>
<path d="M3.3 30C3.3 28.9 4 28.5 5.5 28.5C8 28.5 8.6 30.1 10.6 30.1C13.6 30.1 15 27.6 19 27.6C23 27.6 24.4 30.1 27.4 30.1C29.4 30.1 30 28.5 32.5 28.5C34 28.5 34.7 28.9 34.7 30L34.7 35.2C34.7 36.3 34 36.7 32.5 36.7C30 36.7 29.4 35.1 27.4 35.1C24.4 35.1 23 37.6 19 37.6C15 37.6 13.6 35.1 10.6 35.1C8.6 35.1 8 36.7 5.5 36.7C4 36.7 3.3 36.3 3.3 35.2Z" fill="#2d7df0"/>
<rect x="6.800" y="19.500" width="3.400" height="2.500" fill="#10109a"/>
<rect x="15" y="19.500" width="8.300" height="2.500" fill="#10109a"/>
<rect x="28.700" y="19.500" width="3" height="2.500" fill="#10109a"/>
<rect x="7" y="31.100" width="24.200" height="2.500" fill="#10109a"/>
<rect x="17.800" y="30.700" width="3.100" height="3.300" fill="#0a0a20"/>
<rect x="5" y="38.500" width="3.800" height=".7" fill="#0a0a20"/>
<rect x="28.700" y="38.500" width="4.200" height=".7" fill="#0a0a20"/>
<rect x="17.500" y="40.200" width="4" height=".8" fill="#123" opacity=".6"/>
<rect x="15.400" y="42" width="23" height="7.400" rx="3.600" fill="#14149e"/>
<rect x="17.800" y="43.900" width="17.500" height="1.100" fill="#fff" opacity=".5"/>
<rect x="21.500" y="46.300" width="11" height="1.100" fill="#fff" opacity=".5"/>
</g>
</svg><div class="wb">WB</div></div>
<div class="pn" style="top:408.8px">belt-blue</div>
<div class="ps" style="top:421.2px">SKU: 99719476</div>
<div class="ps" style="top:430.7px">Размер: 71x23x3 см(голубой)</div>
<div class="tri" style="top:412.0px"></div>
<div class="c" style="left:385px;top:433.8px">26 <small>шт</small> | 33 696<svg class="rub" viewBox="0 0 10 12"><path d="M3.3 12V1.3h2.9a3 3 0 0 1 0 6H0.4M0.4 10h6.600" /></svg></div>
<div class="c r" style="left:469px;top:433.8px">2 <small>шт</small> | 2 105<svg class="rub" viewBox="0 0 10 12"><path d="M3.3 12V1.3h2.9a3 3 0 0 1 0 6H0.4M0.4 10h6.600" /></svg></div>
<div class="c r" style="left:534.4px;top:433.8px">5 834<svg class="rub" viewBox="0 0 10 12"><path d="M3.3 12V1.3h2.9a3 3 0 0 1 0 6H0.4M0.4 10h6.600" /></svg></div>
<div class="c g" style="left:617px;top:433.8px">25 269<svg class="rub" viewBox="0 0 10 12"><path d="M3.3 12V1.3h2.9a3 3 0 0 1 0 6H0.4M0.4 10h6.600" /></svg></div>
<div class="c r" style="left:701.5px;top:433.8px">3 152<svg class="rub" viewBox="0 0 10 12"><path d="M3.3 12V1.3h2.9a3 3 0 0 1 0 6H0.4M0.4 10h6.600" /></svg></div>
<div class="c r" style="left:761px;top:433.8px">17<svg class="rub" viewBox="0 0 10 12"><path d="M3.3 12V1.3h2.9a3 3 0 0 1 0 6H0.4M0.4 10h6.600" /></svg></div>
<div class="c r" style="left:816.3px;top:433.8px">410<svg class="rub" viewBox="0 0 10 12"><path d="M3.3 12V1.3h2.9a3 3 0 0 1 0 6H0.4M0.4 10h6.600" /></svg></div>
<div class="c m" style="left:867.8px;top:433.8px">0<svg class="rub" viewBox="0 0 10 12"><path d="M3.3 12V1.3h2.9a3 3 0 0 1 0 6H0.4M0.4 10h6.600" /></svg></div>
<div class="c m" style="left:918.2px;top:433.8px">0<svg class="rub" viewBox="0 0 10 12"><path d="M3.3 12V1.3h2.9a3 3 0 0 1 0 6H0.4M0.4 10h6.600" /></svg></div>
<div class="c g" style="left:969px;top:433.8px">21 688<svg class="rub" viewBox="0 0 10 12"><path d="M3.3 12V1.3h2.9a3 3 0 0 1 0 6H0.4M0.4 10h6.600" /></svg></div>
<div class="c r" style="left:1038.8px;top:433.8px">9 768<svg class="rub" viewBox="0 0 10 12"><path d="M3.3 12V1.3h2.9a3 3 0 0 1 0 6H0.4M0.4 10h6.600" /></svg></div>
<div class="c r" style="left:1104px;top:433.8px">1 254<svg class="rub" viewBox="0 0 10 12"><path d="M3.3 12V1.3h2.9a3 3 0 0 1 0 6H0.4M0.4 10h6.600" /></svg></div>
<div class="c g" style="left:1150px;top:433.8px"><b>10 666<svg class="rub" viewBox="0 0 10 12"><path d="M3.3 12V1.3h2.9a3 3 0 0 1 0 6H0.4M0.4 10h6.600" /></svg></b></div>
<div class="img" style="top:462.2px"><svg width="37.5" height="50" viewBox="0 0 37.5 50"><defs><filter id="wt2" x="0" y="0" width="100%" height="100%"><feTurbulence type="fractalNoise" baseFrequency=".2 .3" numOctaves="3" seed="7" result="n"/><feColorMatrix in="n" type="matrix" values="0 0 0 0 0  0 0 0 0 0  0 0 0 0 0  2.4 0 0 0 -0.95"/><feComposite in="SourceGraphic" operator="in"/></filter><filter id="bb2" x="-10%" y="-10%" width="120%" height="120%"><feGaussianBlur stdDeviation=".3"/></filter></defs>
<rect width="37.5" height="50" fill="#3f98cf"/>
<rect width="37.5" height="50" fill="#8ed2ec" filter="url(#wt2)"/>
<g filter="url(#bb2)">
<rect x="24" y="4.200" width="11.800" height="4.300" rx=".8" fill="#f268d6"/>
<rect x="24.800" y="6.300" width="10.400" height="1.300" fill="#10106a" opacity=".8"/>
<rect x="30.700" y="14.300" width="5" height=".9" fill="#123" opacity=".55"/>
<path d="M3.3 18.3C3.3 17.2 4 16.8 5.5 16.8C8 16.8 8.6 18.4 10.6 18.4C13.6 18.4 15 15.9 19 15.9C23 15.9 24.4 18.4 27.4 18.4C29.4 18.4 30 16.8 32.5 16.8C34 16.8 34.7 17.2 34.7 18.3L34.7 23.5C34.7 24.6 34 25 32.5 25C30 25 29.4 23.4 27.4 23.4C24.4 23.4 23 25.9 19 25.9C15 25.9 13.6 23.4 10.6 23.4C8.6 23.4 8 25 5.5 25C4 25 3.3 24.6 3.3 23.5Z" fill="#f184dc"/>
<path d="M3.3 30C3.3 28.9 4 28.5 5.5 28.5C8 28.5 8.6 30.1 10.6 30.1C13.6 30.1 15 27.6 19 27.6C23 27.6 24.4 30.1 27.4 30.1C29.4 30.1 30 28.5 32.5 28.5C34 28.5 34.7 28.9 34.7 30L34.7 35.2C34.7 36.3 34 36.7 32.5 36.7C30 36.7 29.4 35.1 27.4 35.1C24.4 35.1 23 37.6 19 37.6C15 37.6 13.6 35.1 10.6 35.1C8.6 35.1 8 36.7 5.5 36.7C4 36.7 3.3 36.3 3.3 35.2Z" fill="#f184dc"/>
<rect x="6.800" y="19.500" width="3.400" height="2.500" fill="#10109a"/>
<rect x="15" y="19.500" width="8.300" height="2.500" fill="#10109a"/>
<rect x="28.700" y="19.500" width="3" height="2.500" fill="#10109a"/>
<rect x="7" y="31.100" width="24.200" height="2.500" fill="#10109a"/>
<rect x="17.800" y="30.700" width="3.100" height="3.300" fill="#0a0a20"/>
<rect x="5" y="38.500" width="3.800" height=".7" fill="#0a0a20"/>
<rect x="28.700" y="38.500" width="4.200" height=".7" fill="#0a0a20"/>
<rect x="17.500" y="40.200" width="4" height=".8" fill="#123" opacity=".6"/>
<rect x="15.400" y="42" width="23" height="7.400" rx="3.600" fill="#14149e"/>
<rect x="17.800" y="43.900" width="17.500" height="1.100" fill="#fff" opacity=".5"/>
<rect x="21.500" y="46.300" width="11" height="1.100" fill="#fff" opacity=".5"/>
</g>
</svg><div class="wb">WB</div></div>
<div class="pn" style="top:461.8px">belt-pink</div>
<div class="ps" style="top:474.2px">SKU: 99719475</div>
<div class="ps" style="top:483.7px">Размер: 71x23x3 см(розовый)</div>
<div class="tri" style="top:465.0px"></div>
<div class="c" style="left:385px;top:486.8px">10 <small>шт</small> | 12 960<svg class="rub" viewBox="0 0 10 12"><path d="M3.3 12V1.3h2.9a3 3 0 0 1 0 6H0.4M0.4 10h6.600" /></svg></div>
<div class="c r" style="left:469px;top:486.8px">1 <small>шт</small> | 1 049<svg class="rub" viewBox="0 0 10 12"><path d="M3.3 12V1.3h2.9a3 3 0 0 1 0 6H0.4M0.4 10h6.600" /></svg></div>
<div class="c r" style="left:534.4px;top:486.8px">2 177<svg class="rub" viewBox="0 0 10 12"><path d="M3.3 12V1.3h2.9a3 3 0 0 1 0 6H0.4M0.4 10h6.600" /></svg></div>
<div class="c g" style="left:617px;top:486.8px">9 486<svg class="rub" viewBox="0 0 10 12"><path d="M3.3 12V1.3h2.9a3 3 0 0 1 0 6H0.4M0.4 10h6.600" /></svg></div>
<div class="c r" style="left:701.5px;top:486.8px">1 418<svg class="rub" viewBox="0 0 10 12"><path d="M3.3 12V1.3h2.9a3 3 0 0 1 0 6H0.4M0.4 10h6.600" /></svg></div>
<div class="c r" style="left:761px;top:486.8px">69<svg class="rub" viewBox="0 0 10 12"><path d="M3.3 12V1.3h2.9a3 3 0 0 1 0 6H0.4M0.4 10h6.600" /></svg></div>
<div class="c r" style="left:816.3px;top:486.8px">208<svg class="rub" viewBox="0 0 10 12"><path d="M3.3 12V1.3h2.9a3 3 0 0 1 0 6H0.4M0.4 10h6.600" /></svg></div>
<div class="c m" style="left:867.8px;top:486.8px">0<svg class="rub" viewBox="0 0 10 12"><path d="M3.3 12V1.3h2.9a3 3 0 0 1 0 6H0.4M0.4 10h6.600" /></svg></div>
<div class="c m" style="left:918.2px;top:486.8px">0<svg class="rub" viewBox="0 0 10 12"><path d="M3.3 12V1.3h2.9a3 3 0 0 1 0 6H0.4M0.4 10h6.600" /></svg></div>
<div class="c g" style="left:969px;top:486.8px">7 790<svg class="rub" viewBox="0 0 10 12"><path d="M3.3 12V1.3h2.9a3 3 0 0 1 0 6H0.4M0.4 10h6.600" /></svg></div>
<div class="c r" style="left:1038.8px;top:486.8px">3 663<svg class="rub" viewBox="0 0 10 12"><path d="M3.3 12V1.3h2.9a3 3 0 0 1 0 6H0.4M0.4 10h6.600" /></svg></div>
<div class="c r" style="left:1104px;top:486.8px">473<svg class="rub" viewBox="0 0 10 12"><path d="M3.3 12V1.3h2.9a3 3 0 0 1 0 6H0.4M0.4 10h6.600" /></svg></div>
<div class="c g" style="left:1150px;top:486.8px"><b>3 653<svg class="rub" viewBox="0 0 10 12"><path d="M3.3 12V1.3h2.9a3 3 0 0 1 0 6H0.4M0.4 10h6.600" /></svg></b></div>
<div class="img" style="top:515.2px"><svg width="37.5" height="50" viewBox="0 0 37.5 50"><defs><linearGradient id="bagg" x1="0" y1="0" x2="0" y2="1"><stop offset="0" stop-color="#b9b2a9" stop-opacity=".85"/><stop offset=".35" stop-color="#d8d2c9" stop-opacity=".92"/><stop offset="1" stop-color="#e6e1da" stop-opacity=".95"/></linearGradient><filter id="c0" x="-10%" y="-10%" width="120%" height="120%"><feGaussianBlur stdDeviation=".4"/></filter><filter id="c1" x="-20%" y="-20%" width="140%" height="140%"><feGaussianBlur stdDeviation="1.300"/></filter></defs>
<rect width="37.5" height="50" fill="#211d1b"/>
<g filter="url(#c1)">
<rect x="24" y="0" width="14" height="32" fill="#4a413a"/>
<rect x="25.500" y="12" width="9" height="4" fill="#8a7a68"/>
<rect x="25.500" y="19" width="8" height="4" fill="#7a6e62"/>
<rect x="0" y="14" width="22" height="9" fill="#3a4038"/>
<rect x="0" y="40" width="37.500" height="10" fill="#4b4a49"/>
</g>
<g filter="url(#c0)">
<path d="M12.500 25.500c1-4 2.500-6.400 3.400-6.400s2.600 2.400 4 6.400" fill="none" stroke="#d9d0c4" stroke-width="1.100"/>
<path d="M4.200 24.400l12.800-1 12 .8-.8 17-10.500 1.400L4.600 41.200z" fill="url(#bagg)"/>
<path d="M10.500 30.500q7-4 14.500 0l-.5 10.800h-13.500z" fill="#e9cb9c" opacity=".92"/>
<path d="M13 31l3 3 1.500-3.500M19 31l1.500 3" stroke="#f4efe8" stroke-width=".9" fill="none"/>
</g>
<rect x="28.600" y="29" width="7" height="1.800" fill="#eee" opacity=".85"/>
<rect x="12.500" y="43.800" width="7.500" height="1.800" fill="#eee" opacity=".85"/>
<rect x="27.500" y="43" width="7.500" height="1.800" fill="#eee" opacity=".85"/>
<rect x="24" y="3.500" width="3" height="1.400" fill="#ccc" opacity=".7"/>
<rect x="24" y="7.300" width="7.500" height="1.600" fill="#bbb" opacity=".7"/>
</svg><div class="wb">WB</div></div>
<div class="pn" style="top:514.9px">BagBag-XL</div>
<div class="ps" style="top:527.2px">SKU: 76580820</div>
<div class="tri" style="top:518.1px"></div>
<div class="c" style="left:385px;top:539.9px">20 <small>шт</small> | 10 980<svg class="rub" viewBox="0 0 10 12"><path d="M3.3 12V1.3h2.9a3 3 0 0 1 0 6H0.4M0.4 10h6.600" /></svg></div>
<div class="c" style="left:469px;top:539.9px"><span class="m">0 <small style="color:inherit">шт</small></span> | <span class="m">0<svg class="rub" viewBox="0 0 10 12"><path d="M3.3 12V1.3h2.9a3 3 0 0 1 0 6H0.4M0.4 10h6.600" /></svg></span></div>
<div class="c r" style="left:534.4px;top:539.9px">2 880<svg class="rub" viewBox="0 0 10 12"><path d="M3.3 12V1.3h2.9a3 3 0 0 1 0 6H0.4M0.4 10h6.600" /></svg></div>
<div class="c g" style="left:617px;top:539.9px">8 099<svg class="rub" viewBox="0 0 10 12"><path d="M3.3 12V1.3h2.9a3 3 0 0 1 0 6H0.4M0.4 10h6.600" /></svg></div>
<div class="c r" style="left:701.5px;top:539.9px">1 117<svg class="rub" viewBox="0 0 10 12"><path d="M3.3 12V1.3h2.9a3 3 0 0 1 0 6H0.4M0.4 10h6.600" /></svg></div>
<div class="c r" style="left:761px;top:539.9px">7<svg class="rub" viewBox="0 0 10 12"><path d="M3.3 12V1.3h2.9a3 3 0 0 1 0 6H0.4M0.4 10h6.600" /></svg></div>
<div class="c r" style="left:816.3px;top:539.9px">34<svg class="rub" viewBox="0 0 10 12"><path d="M3.3 12V1.3h2.9a3 3 0 0 1 0 6H0.4M0.4 10h6.600" /></svg></div>
<div class="c m" style="left:867.8px;top:539.9px">0<svg class="rub" viewBox="0 0 10 12"><path d="M3.3 12V1.3h2.9a3 3 0 0 1 0 6H0.4M0.4 10h6.600" /></svg></div>
<div class="c m" style="left:918.2px;top:539.9px">0<svg class="rub" viewBox="0 0 10 12"><path d="M3.3 12V1.3h2.9a3 3 0 0 1 0 6H0.4M0.4 10h6.600" /></svg></div>
<div class="c g" style="left:969px;top:539.9px">6 940<svg class="rub" viewBox="0 0 10 12"><path d="M3.3 12V1.3h2.9a3 3 0 0 1 0 6H0.4M0.4 10h6.600" /></svg></div>
<div class="c r" style="left:1038.8px;top:539.9px">3 140<svg class="rub" viewBox="0 0 10 12"><path d="M3.3 12V1.3h2.9a3 3 0 0 1 0 6H0.4M0.4 10h6.600" /></svg></div>
<div class="c r" style="left:1104px;top:539.9px">436<svg class="rub" viewBox="0 0 10 12"><path d="M3.3 12V1.3h2.9a3 3 0 0 1 0 6H0.4M0.4 10h6.600" /></svg></div>
<div class="c g" style="left:1150px;top:539.9px"><b>3 363<svg class="rub" viewBox="0 0 10 12"><path d="M3.3 12V1.3h2.9a3 3 0 0 1 0 6H0.4M0.4 10h6.600" /></svg></b></div>
<div class="img" style="top:568.3px"><svg width="37.5" height="50" viewBox="0 0 37.5 50"><defs><filter id="wt4" x="0" y="0" width="100%" height="100%"><feTurbulence type="fractalNoise" baseFrequency=".2 .3" numOctaves="3" seed="11" result="n"/><feColorMatrix in="n" type="matrix" values="0 0 0 0 0  0 0 0 0 0  0 0 0 0 0  2.4 0 0 0 -0.95"/><feComposite in="SourceGraphic" operator="in"/></filter><filter id="bb4" x="-10%" y="-10%" width="120%" height="120%"><feGaussianBlur stdDeviation=".3"/></filter></defs>
<rect width="37.5" height="50" fill="#3f98cf"/>
<rect width="37.5" height="50" fill="#8ed2ec" filter="url(#wt4)"/>
<g filter="url(#bb4)">
<rect x="24" y="4.200" width="11.800" height="4.300" rx=".8" fill="#f26a4e"/>
<rect x="24.800" y="6.300" width="10.400" height="1.300" fill="#10106a" opacity=".8"/>
<rect x="30.700" y="14.300" width="5" height=".9" fill="#123" opacity=".55"/>
<path d="M3.3 18.3C3.3 17.2 4 16.8 5.5 16.8C8 16.8 8.6 18.4 10.6 18.4C13.6 18.4 15 15.9 19 15.9C23 15.9 24.4 18.4 27.4 18.4C29.4 18.4 30 16.8 32.5 16.8C34 16.8 34.7 17.2 34.7 18.3L34.7 23.5C34.7 24.6 34 25 32.5 25C30 25 29.4 23.4 27.4 23.4C24.4 23.4 23 25.9 19 25.9C15 25.9 13.6 23.4 10.6 23.4C8.6 23.4 8 25 5.5 25C4 25 3.3 24.6 3.3 23.5Z" fill="#f47a6c"/>
<path d="M3.3 30C3.3 28.9 4 28.5 5.5 28.5C8 28.5 8.6 30.1 10.6 30.1C13.6 30.1 15 27.6 19 27.6C23 27.6 24.4 30.1 27.4 30.1C29.4 30.1 30 28.5 32.5 28.5C34 28.5 34.7 28.9 34.7 30L34.7 35.2C34.7 36.3 34 36.7 32.5 36.7C30 36.7 29.4 35.1 27.4 35.1C24.4 35.1 23 37.6 19 37.6C15 37.6 13.6 35.1 10.6 35.1C8.6 35.1 8 36.7 5.5 36.7C4 36.7 3.3 36.3 3.3 35.2Z" fill="#f47a6c"/>
<rect x="6.800" y="19.500" width="3.400" height="2.500" fill="#10109a"/>
<rect x="15" y="19.500" width="8.300" height="2.500" fill="#10109a"/>
<rect x="28.700" y="19.500" width="3" height="2.500" fill="#10109a"/>
<rect x="7" y="31.100" width="24.200" height="2.500" fill="#10109a"/>
<rect x="17.800" y="30.700" width="3.100" height="3.300" fill="#0a0a20"/>
<rect x="5" y="38.500" width="3.800" height=".7" fill="#0a0a20"/>
<rect x="28.700" y="38.500" width="4.200" height=".7" fill="#0a0a20"/>
<rect x="17.500" y="40.200" width="4" height=".8" fill="#123" opacity=".6"/>
<rect x="15.400" y="42" width="23" height="7.400" rx="3.600" fill="#14149e"/>
<rect x="17.800" y="43.900" width="17.500" height="1.100" fill="#fff" opacity=".5"/>
<rect x="21.500" y="46.300" width="11" height="1.100" fill="#fff" opacity=".5"/>
</g>
</svg><div class="wb">WB</div></div>
<div class="pn" style="top:567.9px">belt-orange</div>
<div class="ps" style="top:580.3px">SKU: 156570332</div>
<div class="ps" style="top:589.8px">Размер: 71x23x3 см(оранжевый)</div>
<div class="tri" style="top:571.1px"></div>
<div class="c" style="left:385px;top:592.9px">6 <small>шт</small> | 7 776<svg class="rub" viewBox="0 0 10 12"><path d="M3.3 12V1.3h2.9a3 3 0 0 1 0 6H0.4M0.4 10h6.600" /></svg></div>
<div class="c" style="left:469px;top:592.9px"><span class="m">0 <small style="color:inherit">шт</small></span> | <span class="m">0<svg class="rub" viewBox="0 0 10 12"><path d="M3.3 12V1.3h2.9a3 3 0 0 1 0 6H0.4M0.4 10h6.600" /></svg></span></div>
<div class="c r" style="left:534.4px;top:592.9px">1 436<svg class="rub" viewBox="0 0 10 12"><path d="M3.3 12V1.3h2.9a3 3 0 0 1 0 6H0.4M0.4 10h6.600" /></svg></div>
<div class="c g" style="left:617px;top:592.9px">6 339<svg class="rub" viewBox="0 0 10 12"><path d="M3.3 12V1.3h2.9a3 3 0 0 1 0 6H0.4M0.4 10h6.600" /></svg></div>
<div class="c r" style="left:701.5px;top:592.9px">976<svg class="rub" viewBox="0 0 10 12"><path d="M3.3 12V1.3h2.9a3 3 0 0 1 0 6H0.4M0.4 10h6.600" /></svg></div>
<div class="c r" style="left:761px;top:592.9px">111<svg class="rub" viewBox="0 0 10 12"><path d="M3.3 12V1.3h2.9a3 3 0 0 1 0 6H0.4M0.4 10h6.600" /></svg></div>
<div class="c r" style="left:816.3px;top:592.9px">185<svg class="rub" viewBox="0 0 10 12"><path d="M3.3 12V1.3h2.9a3 3 0 0 1 0 6H0.4M0.4 10h6.600" /></svg></div>
<div class="c m" style="left:867.8px;top:592.9px">0<svg class="rub" viewBox="0 0 10 12"><path d="M3.3 12V1.3h2.9a3 3 0 0 1 0 6H0.4M0.4 10h6.600" /></svg></div>
<div class="c m" style="left:918.2px;top:592.9px">0<svg class="rub" viewBox="0 0 10 12"><path d="M3.3 12V1.3h2.9a3 3 0 0 1 0 6H0.4M0.4 10h6.600" /></svg></div>
<div class="c g" style="left:969px;top:592.9px">5 065<svg class="rub" viewBox="0 0 10 12"><path d="M3.3 12V1.3h2.9a3 3 0 0 1 0 6H0.4M0.4 10h6.600" /></svg></div>
<div class="c r" style="left:1038.8px;top:592.9px">2 442<svg class="rub" viewBox="0 0 10 12"><path d="M3.3 12V1.3h2.9a3 3 0 0 1 0 6H0.4M0.4 10h6.600" /></svg></div>
<div class="c r" style="left:1104px;top:592.9px">325<svg class="rub" viewBox="0 0 10 12"><path d="M3.3 12V1.3h2.9a3 3 0 0 1 0 6H0.4M0.4 10h6.600" /></svg></div>
<div class="c g" style="left:1150px;top:592.9px"><b>2 298<svg class="rub" viewBox="0 0 10 12"><path d="M3.3 12V1.3h2.9a3 3 0 0 1 0 6H0.4M0.4 10h6.600" /></svg></b></div>
<div class="img" style="top:621.3px"><svg width="37.5" height="50" viewBox="0 0 37.5 50"><defs><filter id="d0" x="-10%" y="-10%" width="120%" height="120%"><feGaussianBlur stdDeviation=".35"/></filter><filter id="d1" x="-20%" y="-20%" width="140%" height="140%"><feGaussianBlur stdDeviation="1.500"/></filter></defs>
<rect width="37.5" height="50" fill="#cfcbd8"/>
<g filter="url(#d1)">
<circle cx="19" cy="27" r="15" fill="#dcd9e3"/>
<rect x="0" y="40" width="37.500" height="10" fill="#c4c0cf"/>
</g>
<g filter="url(#d0)">
<rect x="11.700" y="16" width="13.700" height="19.800" rx=".8" fill="#c6cacd"/>
<rect x="11.700" y="16" width="13.700" height="1.600" fill="#e8a49a"/>
<rect x="13.200" y="18.400" width="10.700" height="9" fill="#d3d7da"/>
<ellipse cx="19" cy="37.600" rx="11.200" ry="1.900" fill="#f1efee"/>
<ellipse cx="19" cy="38.300" rx="10" ry=".9" fill="#d9b9a0" opacity=".6"/>
<circle cx="20.300" cy="30.300" r="4.500" fill="#dfe2e4" stroke="#8f9496" stroke-width=".7"/>
<rect x="9.600" y="41.500" width="18" height="6.600" rx="1.600" fill="#0c0c0c"/>
<rect x="11.500" y="43" width="14" height=".9" fill="#eee" opacity=".6"/>
<rect x="12.500" y="45.200" width="12" height="1.300" fill="#fff" opacity=".75"/>
<rect x="24" y="2.400" width="12" height="1.500" fill="#2a2a2e"/>
<rect x="24" y="5.400" width="9" height="1.500" fill="#2a2a2e"/>
<rect x="26.500" y="8.600" width="9" height=".9" fill="#55555a"/>
<rect x="2" y="2" width="5" height="1.600" fill="#2a2a2e"/>
</g>
</svg><div class="wb">WB</div></div>
<div class="pn" style="top:620.9px">0,08mm3m</div>
<div class="ps" style="top:633.3px">SKU: 95242609</div>
<div class="tri" style="top:624.1px"></div>
<div class="c" style="left:385px;top:645.9px">4 <small>шт</small> | 3 996<svg class="rub" viewBox="0 0 10 12"><path d="M3.3 12V1.3h2.9a3 3 0 0 1 0 6H0.4M0.4 10h6.600" /></svg></div>
<div class="c" style="left:469px;top:645.9px"><span class="m">0 <small style="color:inherit">шт</small></span> | <span class="m">0<svg class="rub" viewBox="0 0 10 12"><path d="M3.3 12V1.3h2.9a3 3 0 0 1 0 6H0.4M0.4 10h6.600" /></svg></span></div>
<div class="c r" style="left:534.4px;top:645.9px">672<svg class="rub" viewBox="0 0 10 12"><path d="M3.3 12V1.3h2.9a3 3 0 0 1 0 6H0.4M0.4 10h6.600" /></svg></div>
<div class="c g" style="left:617px;top:645.9px">3 323<svg class="rub" viewBox="0 0 10 12"><path d="M3.3 12V1.3h2.9a3 3 0 0 1 0 6H0.4M0.4 10h6.600" /></svg></div>
<div class="c r" style="left:701.5px;top:645.9px">447<svg class="rub" viewBox="0 0 10 12"><path d="M3.3 12V1.3h2.9a3 3 0 0 1 0 6H0.4M0.4 10h6.600" /></svg></div>
<div class="c r" style="left:761px;top:645.9px">2<svg class="rub" viewBox="0 0 10 12"><path d="M3.3 12V1.3h2.9a3 3 0 0 1 0 6H0.4M0.4 10h6.600" /></svg></div>
<div class="c m" style="left:816.3px;top:645.9px">0<svg class="rub" viewBox="0 0 10 12"><path d="M3.3 12V1.3h2.9a3 3 0 0 1 0 6H0.4M0.4 10h6.600" /></svg></div>
<div class="c m" style="left:867.8px;top:645.9px">0<svg class="rub" viewBox="0 0 10 12"><path d="M3.3 12V1.3h2.9a3 3 0 0 1 0 6H0.4M0.4 10h6.600" /></svg></div>
<div class="c m" style="left:918.2px;top:645.9px">0<svg class="rub" viewBox="0 0 10 12"><path d="M3.3 12V1.3h2.9a3 3 0 0 1 0 6H0.4M0.4 10h6.600" /></svg></div>
<div class="c g" style="left:969px;top:645.9px">2 872<svg class="rub" viewBox="0 0 10 12"><path d="M3.3 12V1.3h2.9a3 3 0 0 1 0 6H0.4M0.4 10h6.600" /></svg></div>
<div class="c r" style="left:1038.8px;top:645.9px">740<svg class="rub" viewBox="0 0 10 12"><path d="M3.3 12V1.3h2.9a3 3 0 0 1 0 6H0.4M0.4 10h6.600" /></svg></div>
<div class="c r" style="left:1104px;top:645.9px">168<svg class="rub" viewBox="0 0 10 12"><path d="M3.3 12V1.3h2.9a3 3 0 0 1 0 6H0.4M0.4 10h6.600" /></svg></div>
<div class="c g" style="left:1150px;top:645.9px"><b>1 963<svg class="rub" viewBox="0 0 10 12"><path d="M3.3 12V1.3h2.9a3 3 0 0 1 0 6H0.4M0.4 10h6.600" /></svg></b></div>
<div class="img" style="top:674.4px"><svg width="37.5" height="50" viewBox="0 0 37.5 50"><defs></defs><rect width="37.5" height="50" fill="#c3c3ce"/></svg><div class="wb">WB</div></div>
<div class="abs" style="left:1190.5px;top:0;width:9.5px;height:675px;background:#f9f9f9;border-left:1px solid #ededed"></div>
<div class="abs" style="left:1193.2px;top:2px;width:4.7px;height:558.5px;border-radius:2.4px;background:#c1c1c1"></div>
</div></body></html>
